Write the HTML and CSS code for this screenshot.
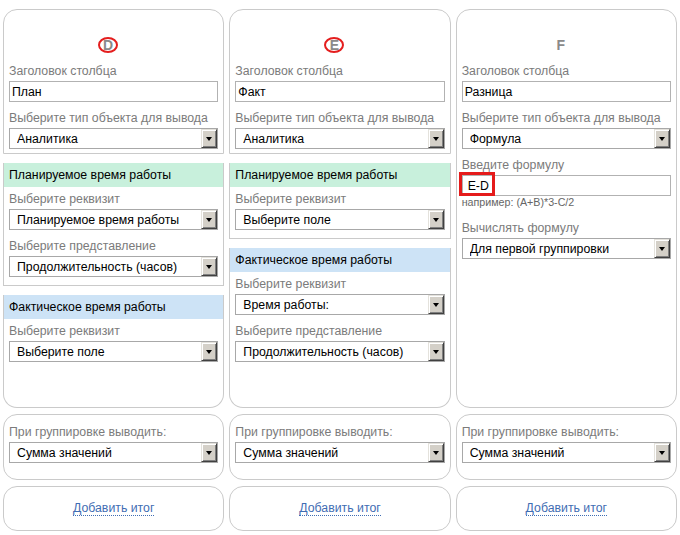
FILE: index.html
```html
<!DOCTYPE html>
<html lang="ru">

<head>
    <meta charset="UTF-8" />
    <title>Столбцы отчёта</title>
    <link rel="stylesheet" href="styles.css">
</head>

<body>
    <div class="columns">

        <!-- столбец D -->
        <div class="stack">
            <div class="box box-head">
                <div class="col-name"><span class="ring">D</span></div>
                <div class="field">
                    <label>Заголовок столбца</label>
                    <input class="input" type="text" value="План">
                </div>
                <div class="field">
                    <label>Выберите тип объекта для вывода</label>
                    <div class="select"><select><option>Аналитика</option></select><span class="btn"></span></div>
                </div>
            </div>
            <div class="box sect">
                <div class="sect-title green">Планируемое время работы</div>
                <div class="field">
                    <label>Выберите реквизит</label>
                    <div class="select"><select><option>Планируемое время работы</option></select><span class="btn"></span></div>
                </div>
                <div class="field">
                    <label>Выберите представление</label>
                    <div class="select"><select><option>Продолжительность (часов)</option></select><span class="btn"></span></div>
                </div>
            </div>
            <div class="box sect sect-last">
                <div class="sect-title blue">Фактическое время работы</div>
                <div class="field">
                    <label>Выберите реквизит</label>
                    <div class="select"><select><option>Выберите поле</option></select><span class="btn"></span></div>
                </div>
            </div>
        </div>

        <!-- столбец E -->
        <div class="stack">
            <div class="box box-head">
                <div class="col-name"><span class="ring">E</span></div>
                <div class="field">
                    <label>Заголовок столбца</label>
                    <input class="input" type="text" value="Факт">
                </div>
                <div class="field">
                    <label>Выберите тип объекта для вывода</label>
                    <div class="select"><select><option>Аналитика</option></select><span class="btn"></span></div>
                </div>
            </div>
            <div class="box sect">
                <div class="sect-title green">Планируемое время работы</div>
                <div class="field">
                    <label>Выберите реквизит</label>
                    <div class="select"><select><option>Выберите поле</option></select><span class="btn"></span></div>
                </div>
            </div>
            <div class="box sect sect-last">
                <div class="sect-title blue">Фактическое время работы</div>
                <div class="field">
                    <label>Выберите реквизит</label>
                    <div class="select"><select><option>Время работы:</option></select><span class="btn"></span></div>
                </div>
                <div class="field">
                    <label>Выберите представление</label>
                    <div class="select"><select><option>Продолжительность (часов)</option></select><span class="btn"></span></div>
                </div>
            </div>
        </div>

        <!-- столбец F -->
        <div class="stack">
            <div class="box box-full">
                <div class="col-name">F</div>
                <div class="field">
                    <label>Заголовок столбца</label>
                    <input class="input" type="text" value="Разница">
                </div>
                <div class="field">
                    <label>Выберите тип объекта для вывода</label>
                    <div class="select"><select><option>Формула</option></select><span class="btn"></span></div>
                </div>
                <div class="field field-formula">
                    <label>Введите формулу</label>
                    <div class="formula">
                        <input class="input" type="text" value="E-D">
                        <span class="mark"></span>
                    </div>
                    <p class="hint">например: (A+B)*3-C/2</p>
                </div>
                <div class="field">
                    <label>Вычислять формулу</label>
                    <div class="select"><select><option>Для первой группировки</option></select><span class="btn"></span></div>
                </div>
            </div>
        </div>

        <!-- группировка -->
        <div class="card">
            <div class="field">
                <label>При группировке выводить:</label>
                <div class="select"><select><option>Сумма значений</option></select><span class="btn"></span></div>
            </div>
        </div>
        <div class="card">
            <div class="field">
                <label>При группировке выводить:</label>
                <div class="select"><select><option>Сумма значений</option></select><span class="btn"></span></div>
            </div>
        </div>
        <div class="card">
            <div class="field">
                <label>При группировке выводить:</label>
                <div class="select"><select><option>Сумма значений</option></select><span class="btn"></span></div>
            </div>
        </div>

        <!-- итоги -->
        <div class="card card-link"><a href="#">Добавить итог</a></div>
        <div class="card card-link"><a href="#">Добавить итог</a></div>
        <div class="card card-link"><a href="#">Добавить итог</a></div>

    </div>
</body>

</html>
```

FILE: styles.css
```css
body {
    font-family: "Liberation Sans", Arial, sans-serif;
    font-size: 12.3px;
    color: #000;
    background-color: #fff;
    margin: 0;
    padding: 9px 3px 0;
}

.columns {
    display: grid;
    grid-template-columns: repeat(3, 1fr);
    grid-template-rows: 399px auto auto;
    column-gap: 5px;
    row-gap: 6px;
}

.stack {
    display: flex;
    flex-direction: column;
    gap: 9px;
}

.box {
    border: 1px solid #cacaca;
    padding: 0 5px;
}

.box-head {
    border-radius: 14px 14px 0 0;
    padding-top: 25px;
    padding-bottom: 4px;
}

.box-full {
    flex: 1;
    border-radius: 14px;
    padding-top: 25px;
}

.sect {
    border-top: none;
    padding-bottom: 8px;
}

.sect-last {
    flex: 1;
    border-radius: 0 0 14px 14px;
}

.sect-title {
    margin: 0 -5px 5px;
    padding: 0 5px;
    height: 24px;
    line-height: 24px;
}

.green {
    background-color: #c8f0dc;
}

.blue {
    background-color: #cde3f6;
}

.col-name {
    display: flex;
    justify-content: center;
    align-items: center;
    height: 20px;
    margin-bottom: 9px;
    padding-right: 11px;
    font-size: 14px;
    font-weight: bold;
    color: #8a8a8a;
}

.ring {
    display: inline-block;
    width: 16px;
    height: 12px;
    line-height: 12px;
    text-align: center;
    border: 2.5px solid #e41e1e;
    border-radius: 50%;
}

.field {
    margin-bottom: 9px;
}

.field:last-child {
    margin-bottom: 0;
}

.field label {
    display: block;
    color: #7b7b7b;
    line-height: 15px;
    margin-bottom: 2px;
}

.input {
    display: block;
    box-sizing: border-box;
    width: 100%;
    height: 21px;
    margin: 0;
    padding: 0 2px;
    border: 1px solid #b2b2b2;
    font: inherit;
    color: #000;
    outline: none;
}

.select {
    display: flex;
    box-sizing: border-box;
    height: 21px;
    border: 1px solid #a8a8a8;
}

.select select {
    flex: 1;
    min-width: 0;
    appearance: none;
    -webkit-appearance: none;
    border: none;
    background: transparent;
    margin: 0;
    padding: 0 0 0 7px;
    font: inherit;
    color: #000;
    outline: none;
}

.btn {
    display: flex;
    align-items: center;
    justify-content: center;
    box-sizing: border-box;
    width: 16px;
    background-color: #d4d0c8;
    border: 1px solid;
    border-color: #e4e2dc #404040 #404040 #e4e2dc;
    box-shadow: inset 1px 1px #fff, inset -1px -1px #808080;
}

.btn::before {
    content: "";
    border-style: solid;
    border-width: 4px 3.5px 0;
    border-color: #000 transparent transparent;
}

.field-formula {
    margin-bottom: 0;
}

.formula {
    position: relative;
}

.formula .input {
    padding-left: 5px;
}

.mark {
    position: absolute;
    left: -3px;
    top: -3px;
    width: 30px;
    height: 18px;
    border: 3px solid #e51b1b;
}

.hint {
    margin: 0 0 12px;
    font-size: 10.7px;
    line-height: 13px;
    color: #666;
}

.card {
    border: 1px solid #cacaca;
    border-radius: 14px;
    padding: 10px 5px 16px;
}

.card-link {
    padding: 14px 5px;
    line-height: 15px;
    text-align: center;
}

.card-link a {
    color: #3f6db3;
    text-decoration: none;
    border-bottom: 1px dotted #3f6db3;
}
```
